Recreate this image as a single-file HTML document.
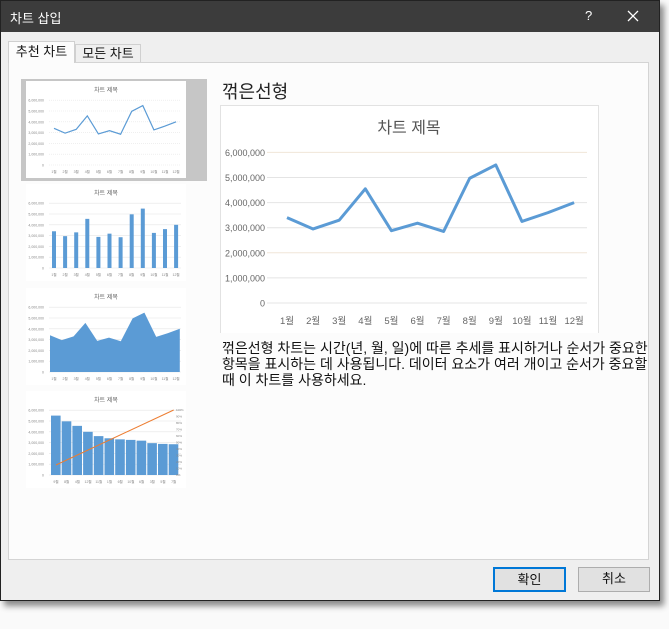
<!DOCTYPE html>
<html><head><meta charset="utf-8"><style>
*{margin:0;padding:0;box-sizing:border-box}
body{width:669px;height:629px;background:#fafafa;position:relative;overflow:hidden;font-family:"Liberation Sans","Noto Sans CJK KR",sans-serif}
#win{position:absolute;left:0;top:0;width:660px;height:601px;background:#efefef;border:1px solid #222;box-shadow:4px 5px 6px rgba(0,0,0,.45)}
#tb{position:absolute;left:0;top:0;width:658px;height:31px;background:#3c3c3c;color:#fff;font-size:13px}
.abs{position:absolute}
.tab{position:absolute;font-size:13px;color:#111;border:1px solid #d0d0d0;border-bottom:none;text-align:center}
#panel{position:absolute;left:7px;top:61px;width:641px;height:498px;background:#fcfcfc;border:1px solid #d4d4d4}
.btn{position:absolute;top:566px;height:25px;background:#e1e1e1;border:1px solid #adadad;font-size:13px;text-align:center;line-height:22px;color:#111}
svg text{font-family:"Liberation Sans","Noto Sans CJK KR",sans-serif}
</style></head><body>
<div id="win">
<div id="tb"><span class="abs" style="left:9px;top:7px">차트 삽입</span><span class="abs" style="left:584px;top:7px">?</span>
<svg class="abs" style="left:626px;top:9px" width="12" height="12"><path d="M1 1L11 11M11 1L1 11" stroke="#fff" stroke-width="1.3"/></svg></div>
<div class="tab" style="left:7px;top:40px;width:67px;height:22px;background:#fcfcfc;line-height:20px;z-index:2">추천 차트</div>
<div class="tab" style="left:74px;top:43px;width:66px;height:18px;background:#efefef;line-height:17px">모든 차트</div>
<div id="panel"></div>
<div class="abs" style="left:20px;top:78px;width:186px;height:102px;background:#c6c6c6"></div>
<svg class="abs" style="left:25px;top:80px" width="160" height="97" id="t1"></svg>
<svg class="abs" style="left:25px;top:183px" width="160" height="98" id="t2"></svg>
<svg class="abs" style="left:25px;top:287px" width="160" height="97" id="t3"></svg>
<svg class="abs" style="left:25px;top:390px" width="160" height="97" id="t4"></svg>
<div class="abs" style="left:221px;top:77px;font-size:18px;color:#222">꺾은선형</div>
<svg class="abs" style="left:219px;top:104px" width="380" height="228" id="main"></svg>
<div class="abs" style="left:221px;top:339px;width:426px;overflow:hidden;font-size:14px;line-height:16px;color:#111;white-space:nowrap">꺾은선형 차트는 시간(년, 월, 일)에 따른 추세를 표시하거나 순서가 중요한<br>항목을 표시하는 데 사용됩니다. 데이터 요소가 여러 개이고 순서가 중요할<br>때 이 차트를 사용하세요.</div>
<div class="btn" style="left:492px;width:73px;border:2px solid #0078d7;line-height:21px">확인</div>
<div class="btn" style="left:577px;width:72px">취소</div>
</div>
<script>
var d=[3.4,2.95,3.3,4.55,2.88,3.18,2.85,4.97,5.5,3.25,3.6,4.0];
var ns='http://www.w3.org/2000/svg';
function el(s,t,a,txt){var e=document.createElementNS(ns,t);for(var k in a)e.setAttribute(k,a[k]);if(txt)e.textContent=txt;s.appendChild(e);return e;}
(function(){var s=document.getElementById('main');
el(s,'rect',{x:0.5,y:0.5,width:378,height:240,fill:'#fff',stroke:'#e2e2e2'});
el(s,'text',{x:189,y:28,'text-anchor':'middle','font-size':16,fill:'#555'},'차트 제목');
var y0=198,k=25.1,x0=67,st=26.1;
for(var i=0;i<=6;i++){var y=y0-i*k;el(s,'line',{x1:47,x2:367,y1:y,y2:y,stroke:(i==2||i==6)?'#f0e6d8':'#e4e4e4'});
el(s,'text',{x:45,y:y+3.5,'text-anchor':'end','font-size':9,fill:'#666'},i==0?'0':(i+',000,000'));}
var p='';for(var i=0;i<12;i++){p+=(i?'L':'M')+(x0+i*st)+','+(y0-d[i]*k);
el(s,'text',{x:x0+i*st,y:y0+21,'text-anchor':'middle','font-size':9.5,fill:'#666'},(i+1)+'월');}
el(s,'path',{d:p,fill:'none',stroke:'#5b9bd5','stroke-width':3,'stroke-linejoin':'round'});
})();
function thumb(id,type){var s=document.getElementById(id);
el(s,'rect',{x:0,y:0,width:160,height:97,fill:'#fff'});
el(s,'text',{x:80,y:11,'text-anchor':'middle','font-size':6,fill:'#666'},'차트 제목');
var y0=84,k=10.8,x0=28,st=11.1;
if(type==4){x0=30;st=10.7;}
for(var i=0;i<=6;i++){var y=y0-i*k;el(s,'line',{x1:23,x2:155,y1:y,y2:y,stroke:'#e6e6e6','stroke-width':0.6,'stroke-dasharray':type==1?'1,1':''});
el(s,'text',{x:18,y:y+1.5,'text-anchor':'end','font-size':3.5,fill:'#888'},i==0?'0':(i+',000,000'));}
var lbl=type==4?[9,8,4,12,11,1,6,10,6,3,5,7]:null;
for(var i=0;i<12;i++)el(s,'text',{x:x0+i*st,y:y0+8,'text-anchor':'middle','font-size':3.5,fill:'#888'},(lbl?lbl[i]:i+1)+'월');
if(type==1){var p='';for(var i=0;i<12;i++)p+=(i?'L':'M')+(x0+i*st)+','+(y0-d[i]*k);
el(s,'path',{d:p,fill:'none',stroke:'#5b9bd5','stroke-width':1.2});}
if(type==2){for(var i=0;i<12;i++)el(s,'rect',{x:x0+i*st-2,y:y0-d[i]*k,width:4,height:d[i]*k,fill:'#5b9bd5'});}
if(type==3){var p='M'+(x0-4)+','+y0;for(var i=0;i<12;i++)p+='L'+(x0-4+i*11.8)+','+(y0-d[i]*k);p+='L'+(x0-4+11*11.8)+','+y0+'Z';
el(s,'path',{d:p,fill:'#5b9bd5'});}
if(type==4){var sd=d.slice().sort(function(a,b){return b-a});for(var i=0;i<12;i++)el(s,'rect',{x:x0+i*st-5,y:y0-sd[i]*k,width:9.6,height:sd[i]*k,fill:'#5b9bd5'});
el(s,'path',{d:'M'+x0+','+(y0-10)+'L'+(x0+11*st)+','+(y0-65),stroke:'#ed7d31','stroke-width':1,fill:'none'});
for(var i=0;i<=10;i++)el(s,'text',{x:150,y:y0-i*6.5+1,'font-size':3,fill:'#888'},(i*10)+'%');}
}
thumb('t1',1);thumb('t2',2);thumb('t3',3);thumb('t4',4);
</script>
</body></html>
